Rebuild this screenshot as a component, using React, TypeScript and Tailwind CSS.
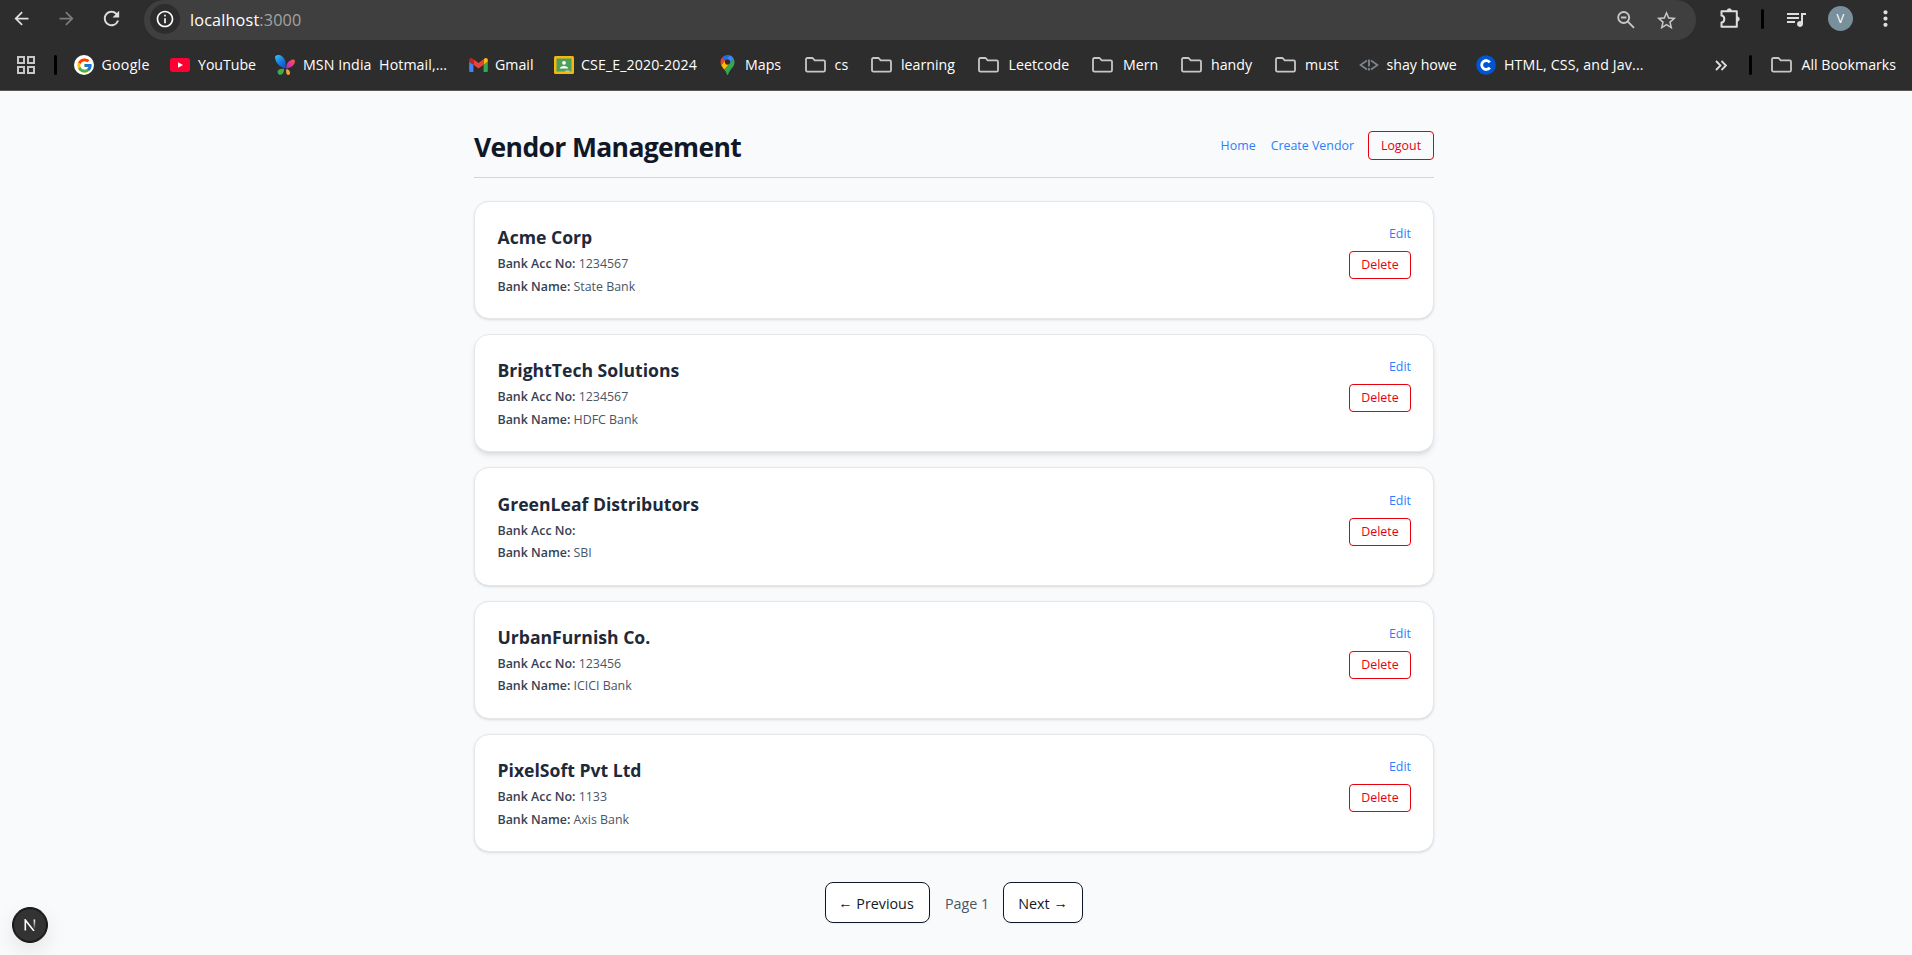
import React from "react";
import { FcGoogle } from "react-icons/fc";
import {
  MdArrowBack,
  MdArrowForward,
  MdRefresh,
  MdInfoOutline,
  MdStarBorder,
  MdQueueMusic,
  MdMoreVert,
} from "react-icons/md";

const Folder = () => (
  <svg viewBox="0 0 21 16" className="h-4 w-[21px]" fill="none" stroke="#c7c7c7" strokeWidth="1.8" strokeLinejoin="round">
    <path d="M1 2.4C1 1.6 1.6 1 2.4 1H7.6L9.7 3.4H18.6C19.4 3.4 20 4 20 4.8V13.2C20 14 19.4 14.6 18.6 14.6H2.4C1.6 14.6 1 14 1 13.2Z" />
  </svg>
);

const GoogleIcon = () => (
  <span className="flex size-5 items-center justify-center rounded-full bg-white">
    <FcGoogle size={17} />
  </span>
);

const YouTubeIcon = () => (
  <svg viewBox="0 0 20 14" className="h-3.5 w-5">
    <rect width="20" height="14" rx="3" fill="#ff0033" />
    <path d="M8 4.2V9.8L13 7Z" fill="#fff" />
  </svg>
);

const MsnIcon = () => (
  <svg viewBox="0 0 20 20" className="size-5">
    <defs>
      <linearGradient id="msnBlue" x1="0" y1="0" x2="0.7" y2="1">
        <stop offset="0" stopColor="#35c9f5" />
        <stop offset="0.6" stopColor="#1877e0" />
        <stop offset="1" stopColor="#1457c8" />
      </linearGradient>
      <linearGradient id="msnPink" x1="1" y1="0" x2="0" y2="1">
        <stop offset="0" stopColor="#f0603c" />
        <stop offset="0.5" stopColor="#e8359b" />
        <stop offset="1" stopColor="#9b2fd0" />
      </linearGradient>
    </defs>
    <path d="M0 2.500C0 0.500 2 0 4 0C7.500 0.500 10.200 4 10.700 8.500C10.900 10.500 10.700 12 10 13.300C7 12.500 1 10 0 2.500Z" fill="url(#msnBlue)" />
    <path d="M20 6.300C20 4.800 18.500 4.300 17 4.800C13.300 5.800 11.300 9 11.200 13.500C15 13 19.500 11 20 6.300Z" fill="url(#msnPink)" />
    <path d="M9 13.800C6 13.300 2.500 14.500 2.600 17C2.700 19 4 20 5.500 19.800C8 19.500 9.200 17 9 13.800Z" fill="#3fae49" />
    <path d="M11.500 14C14 14.500 15.500 16.500 14.800 19C14.300 20.200 12.500 20.200 11.700 19C10.900 17.500 11 15.500 11.500 14Z" fill="#f8a13a" />
  </svg>
);

const GmailIcon = () => (
  <svg viewBox="52 42 88 66" className="ml-px h-[14px] w-[19px]">
    <path fill="#4285f4" d="M58 108h14V74L52 59v43c0 3.320 2.690 6 6 6" />
    <path fill="#34a853" d="M120 108h14c3.320 0 6-2.690 6-6V59l-20 15" />
    <path fill="#fbbc04" d="M120 48v26l20-15v-8c0-7.420-8.470-11.650-14.400-7.200" />
    <path fill="#ea4335" d="M72 74V48l24 18 24-18v26L96 92" />
    <path fill="#c5221f" d="M52 51v8l20 15V48l-5.600-4.200c-5.940-4.450-14.400-.22-14.400 7.200" />
  </svg>
);

const ClassroomIcon = () => (
  <svg viewBox="0 0 20 18" className="h-[18px] w-5">
    <rect width="20" height="18" rx="1.500" fill="#f2b90f" />
    <rect x="2.500" y="2.500" width="15" height="13" fill="#4e9f5b" />
    <circle cx="10" cy="6.800" r="1.900" fill="#fff" />
    <path d="M5.800 12.600C5.800 10.700 8 9.900 10 9.900S14.200 10.700 14.200 12.600Z" fill="#fff" />
    <rect x="11.500" y="14.600" width="4" height="1" fill="#d8e8dc" />
  </svg>
);

const MapsIcon = () => (
  <svg viewBox="0 0 92.300 132.300" className="h-5 w-[15px]">
    <path fill="#1a73e8" d="M60.200 2.200C55.800.8 51 0 46.100 0 32 0 19.300 6.400 10.800 16.500l21.800 18.300L60.200 2.200z" />
    <path fill="#ea4335" d="M10.800 16.500C4.100 24.500 0 34.900 0 46.100c0 8.700 1.700 15.700 4.600 22l28-33.300-21.800-18.300z" />
    <path fill="#4285f4" d="M46.200 28.500c9.800 0 17.700 7.900 17.700 17.700 0 4.300-1.600 8.300-4.200 11.400 0 0 13.900-16.600 27.500-32.700-5.600-10.800-15.300-19-27-22.700L32.600 34.800c3.300-3.800 8.100-6.300 13.600-6.300" />
    <path fill="#fbbc04" d="M46.200 63.800c-9.800 0-17.700-7.900-17.700-17.700 0-4.300 1.500-8.300 4.100-11.300l-28 33.300c4.800 10.600 12.800 19.200 21 29.900l34.100-40.500c-3.300 3.900-8.100 6.300-13.500 6.300" />
    <path fill="#34a853" d="M59.100 109.200c15.400-24.100 33.300-35 33.300-63 0-7.700-1.900-14.900-5.200-21.300L25.600 98c2.600 3.400 5.300 7.300 7.900 11.300 9.400 14.500 6.800 23.100 12.800 23.100s3.400-8.700 12.800-23.200" />
  </svg>
);

const ShayIcon = () => (
  <svg viewBox="0 0 20 12" className="h-3 w-5" fill="none" stroke="#7f868d" strokeWidth="1.600">
    <path d="M8 1.500L1.500 6L8 10.500M12 1.500L18.500 6L12 10.500" />
    <path d="M10 0.500V7.500M10 9V11.500" strokeWidth="1.800" />
  </svg>
);

const CIcon = () => (
  <svg viewBox="0 0 20 20" className="size-5">
    <circle cx="10" cy="10" r="9.800" fill="#0056d2" />
    <path d="M13.800 7.300A4.500 4.500 0 1 0 13.800 12.700" fill="none" stroke="#fff" strokeWidth="2.800" />
  </svg>
);

const ZoomOutIcon = () => (
  <svg viewBox="0 0 18 18" className="size-[18px]" fill="none" stroke="currentColor" strokeWidth="1.900">
    <circle cx="6.700" cy="6.500" r="5.500" />
    <path d="M4 6.500H9.400M10.600 10.400L17 16.800" />
  </svg>
);

const PuzzleIcon = () => (
  <svg viewBox="0 0 21 21" className="ml-6 h-[21px] w-[21px]" fill="none" stroke="currentColor" strokeWidth="2" strokeLinejoin="round">
    <path d="M1.500 3.200H16.800V18.800H1.500V14.600C3.400 14.400 4.300 12.800 4.300 11C4.300 9.200 3.400 7.700 1.500 7.400Z" />
    <path d="M7 3A2.300 2.300 0 0 1 11.600 3ZM17 8.700A2.300 2.300 0 0 1 17 13.300Z" fill="currentColor" strokeWidth="0.800" />
  </svg>
);

type Bookmark = { label: string; icon: React.ReactNode; box: string; gap: string };

const bookmarks: Bookmark[] = [
  { label: "Google", icon: <GoogleIcon />, box: "w-24 tracking-[0.25px]", gap: "w-[27.5px]" },
  { label: "YouTube", icon: <YouTubeIcon />, box: "w-[105px] tracking-[-0.05px]", gap: "w-7" },
  { label: "MSN India  Hotmail,...", icon: <MsnIcon />, box: "w-[193px] tracking-[0.09px]", gap: "w-7" },
  { label: "Gmail", icon: <GmailIcon />, box: "w-[86px]", gap: "w-[27px]" },
  { label: "CSE_E_2020-2024", icon: <ClassroomIcon />, box: "w-[166px] tracking-[0.1px]", gap: "w-[27px]" },
  { label: "Maps", icon: <MapsIcon />, box: "w-[85px]", gap: "w-[25px]" },
  { label: "cs", icon: <Folder />, box: "w-[66px] tracking-[0.2px]", gap: "w-[29.5px]" },
  { label: "learning", icon: <Folder />, box: "w-[107px]", gap: "w-[30px]" },
  { label: "Leetcode", icon: <Folder />, box: "w-[114px] tracking-[0.05px]", gap: "w-[30.5px]" },
  { label: "Mern", icon: <Folder />, box: "w-[89px]", gap: "w-[31px]" },
  { label: "handy", icon: <Folder />, box: "w-[94px]", gap: "w-[30px]" },
  { label: "must", icon: <Folder />, box: "w-[84px]", gap: "w-[30px]" },
  { label: "shay howe", icon: <ShayIcon />, box: "w-[117px]", gap: "w-[27.5px]" },
  { label: "HTML, CSS, and Jav...", icon: <CIcon />, box: "w-[240px] tracking-[0.15px]", gap: "w-7" },
];

const Bar = ({ className = "" }: { className?: string }) => (
  <span className={`h-5 w-[3px] shrink-0 rounded-sm bg-black ${className}`} />
);

function BrowserChrome() {
  return (
    <header className="h-[91px] border-b border-[#5b5658] bg-[#2d2d2d] text-white">
      <div className="flex h-10 items-center">
        <div className="flex h-full w-36 items-center pb-[3px] text-[#dedede]">
          <MdArrowBack className="ml-[11px]" size={21} />
          <MdArrowForward className="ml-6 text-[#7b7b7b]" size={21} />
          <MdRefresh className="ml-[23px]" size={23} />
        </div>
        <div className="flex h-10 w-[1552px] items-center rounded-full bg-[#3f3f3f] pl-1.5">
          <span className="mb-0.5 flex size-[30px] items-center justify-center rounded-full bg-[#2d2d2d]">
            <MdInfoOutline size={20} />
          </span>
          <span className="ml-[10px] text-[16.200px] leading-none tracking-[0.17px]">
            localhost<span className="text-[#a3a3a3]">:3000</span>
          </span>
          <span className="mr-[18px] ml-auto flex items-center gap-[20px] text-[#c7c7c7]">
            <ZoomOutIcon />
            <MdStarBorder size={23} />
          </span>
        </div>
        <div className="flex flex-1 items-center pb-[3px] text-[#dedede]">
          <PuzzleIcon />
          <Bar className="ml-[20px]" />
          <MdQueueMusic className="ml-[20px]" size={24} />
          <span className="ml-5 flex size-[25px] items-center justify-center rounded-full bg-[#78909c] text-[13px] text-white">V</span>
          <MdMoreVert className="ml-[20px]" size={25} />
        </div>
      </div>
      <div className="flex h-[50px] items-center text-[14.200px] leading-5 whitespace-pre">
        <svg viewBox="0 0 18 18" className="ml-[17px] size-[18px]" fill="none" stroke="#c7c7c7" strokeWidth="2">
          <path d="M1 1H7V7H1ZM11 1H17V7H11ZM1 11H7V17H1ZM11 11H17V17H11Z" />
        </svg>
        <Bar className="mr-[17px] ml-[19px]" />
        {bookmarks.map((b) => (
          <span key={b.label} className={`flex shrink-0 items-center ${b.box}`}>
            <span className={`flex shrink-0 items-center ${b.gap}`}>{b.icon}</span>
            {b.label}
          </span>
        ))}
        <svg viewBox="0 0 12 11" className="-ml-px h-[11px] w-3" fill="none" stroke="#dedede" strokeWidth="1.800">
          <path d="M1 1L5.500 5.500L1 10M6.500 1L11 5.500L6.500 10" />
        </svg>
        <Bar className="mr-[19px] ml-[22px]" />
        <span className="w-[30.500px]"><Folder /></span>
        All Bookmarks
      </div>
    </header>
  );
}

type Vendor = { name: string; account: string; bank: string; raised?: boolean };

const vendors: Vendor[] = [
  { name: "Acme Corp", account: "1234567", bank: "State Bank" },
  { name: "BrightTech Solutions", account: "1234567", bank: "HDFC Bank", raised: true },
  { name: "GreenLeaf Distributors", account: "", bank: "SBI" },
  { name: "UrbanFurnish Co.", account: "123456", bank: "ICICI Bank" },
  { name: "PixelSoft Pvt Ltd", account: "1133", bank: "Axis Bank" },
];

const Field = ({ label, value }: { label: string; value: string }) => (
  <p className="text-[12.400px] leading-[22.500px] text-[#4a5565]">
    <span className="font-semibold text-[#364153]">{label}</span> {value}
  </p>
);

const VendorCard = ({ vendor }: { vendor: Vendor }) => (
  <article
    className={`flex h-[118.200px] justify-between rounded-[15px] border border-gray-200 bg-white px-[22px] pt-[21.300px] ${
      vendor.raised ? "shadow-md" : "shadow-sm"
    }`}
  >
    <div className="pl-[0.500px]">
      <h2 className="mb-[2px] text-[17.600px] leading-7 font-bold text-[#1e2939]">{vendor.name}</h2>
      <Field label="Bank Acc No:" value={vendor.account} />
      <Field label="Bank Name:" value={vendor.bank} />
    </div>
    <div className="flex flex-col items-end text-[12.400px] leading-5">
      <a className="pt-[0.900px] text-[#2b7fff]">Edit</a>
      <button className="mt-[7px] h-7 w-[62px] rounded-[4px] border border-[#e7000b] text-[#e7000b]">Delete</button>
    </div>
  </article>
);

export default function App() {
  return (
    <div className="h-[955px] overflow-hidden bg-[#f9fafb] font-['Open_Sans','Noto_Sans',sans-serif]">
      <BrowserChrome />
      <main className="mx-auto w-[960px] -translate-x-0.5">
        <div className="flex h-[87px] items-start justify-between border-b border-gray-300 pt-10">
          <h1 className="text-[26.500px] leading-8 font-bold tracking-[-0.640px] text-[#101828]">Vendor Management</h1>
          <nav className="flex items-center text-[12.400px] leading-5 text-[#2b7fff]">
            <a>Home</a>
            <a className="ml-[15px]">Create Vendor</a>
            <button className="ml-[14px] h-[29px] w-[66px] rounded-[4px] border border-[#e7000b] text-[#e7000b]">Logout</button>
          </nav>
        </div>
        <section className="mt-[23px] flex flex-col gap-[15px]">
          {vendors.map((v) => (
            <VendorCard key={v.name} vendor={v} />
          ))}
        </section>
        <div className="mt-[30px] flex items-center justify-center text-[14.300px] leading-5 text-[#101828]">
          <button className="h-[41px] w-[105px] rounded-lg border border-[#101828] bg-white pt-[3px] pr-[3px] shadow-xs">
            <span className="inline-block -translate-y-px">←</span> Previous
          </button>
          <span className="w-[73px] pt-[3px] pl-px text-center text-[#4a5565]">Page 1</span>
          <button className="h-[41px] w-20 rounded-lg border border-[#101828] bg-white pt-[3px] shadow-xs">
            Next <span className="inline-block -translate-y-px">→</span>
          </button>
        </div>
      </main>
      <div className="fixed bottom-3 left-3 flex size-9 items-center justify-center rounded-full border border-[#171717] bg-[#333333] shadow-[0_0_0_1px_#171717_inset,0_8px_24px_-4px_rgba(0,0,0,0.15)]">
        <svg viewBox="0 0 12 12" className="size-3" fill="none" strokeWidth="1.600">
          <defs>
            <linearGradient id="nStem" x1="0" y1="0" x2="0" y2="1">
              <stop offset="0" stopColor="#fff" />
              <stop offset="1" stopColor="#fff" stopOpacity="0.100" />
            </linearGradient>
          </defs>
          <path d="M1.300 11.500V1L10 12" stroke="#fff" />
          <rect x="9.600" y="0.500" width="1.600" height="9" fill="url(#nStem)" />
        </svg>
      </div>
    </div>
  );
}
